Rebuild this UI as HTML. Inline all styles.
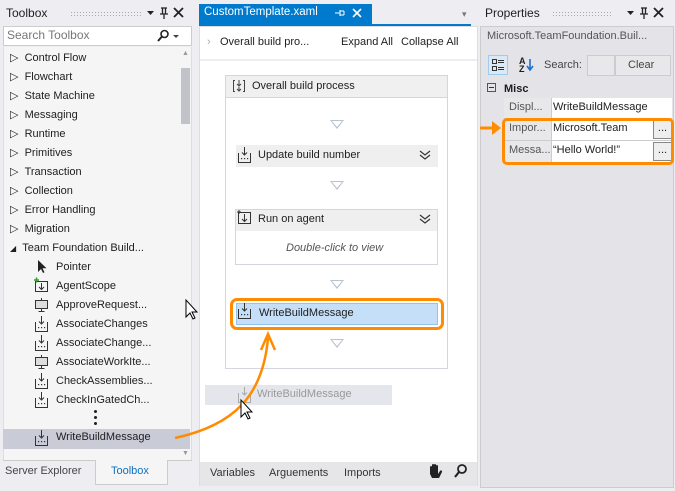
<!DOCTYPE html>
<html><head><meta charset="utf-8"><style>
*{margin:0;padding:0;box-sizing:border-box}
body{width:675px;height:491px;background:#eeeef2;font-family:"Segoe UI","Liberation Sans",sans-serif;font-size:11px;color:#1e1e1e;position:relative;overflow:hidden}
.a{position:absolute;white-space:nowrap}
.dots{background-image:radial-gradient(#aaa 0.6px,transparent 0.7px);background-size:3px 3px}
.tri{position:absolute;width:0;height:0;border-left:7px solid transparent;border-right:7px solid transparent;border-top:9px solid #b8c2d0}
.tri:after{content:"";position:absolute;left:-5px;top:-8px;border-left:5px solid transparent;border-right:5px solid transparent;border-top:6px solid #fff}
</style></head><body>
<!-- Toolbox -->
<div class="a" style="left:6px;top:6px;font-size:12px">Toolbox</div>
<div class="a dots" style="left:70px;top:11px;width:72px;height:6px"></div>
<svg class="a" style="left:145px;top:6px" width="45" height="14"><path d="M2 5h7l-3.5 4z" fill="#222"/><path d="M16 2h6M17.5 2v6M20.5 2v6M15 8h8M19 8v5" stroke="#222" stroke-width="1.3" fill="none"/><path d="M29 2l9 9M38 2l-9 9" stroke="#222" stroke-width="1.8"/></svg>
<div class="a" style="left:3px;top:26px;width:189px;height:20px;background:#fff;border:1px solid #ccc"></div>
<div class="a" style="left:7px;top:28px;font-size:12px;color:#777">Search Toolbox</div>
<svg class="a" style="left:156px;top:29px" width="30" height="14"><circle cx="8.5" cy="5" r="3.5" fill="none" stroke="#222" stroke-width="1.6"/><path d="M6 7.5L2 12" stroke="#222" stroke-width="2"/><path d="M17 6h6l-3 3z" fill="#444"/></svg>
<div class="a" style="left:3px;top:47px;width:189px;height:413px;background:#f5f5f5;border-left:1px solid #ddd;border-right:1px solid #ddd"></div>
<div class="a" style="left:181px;top:68px;width:9px;height:56px;background:#c2c3c9"></div>
<div class="a" style="left:182px;top:50px;font-size:7px;color:#999">▲</div>
<div class="a" style="left:182px;top:450px;font-size:7px;color:#999">▼</div>
<div class="a" style="left:10px;top:49px;line-height:19px;font-size:11px">
<div>▷ &nbsp;Control Flow</div><div>▷ &nbsp;Flowchart</div><div>▷ &nbsp;State Machine</div><div>▷ &nbsp;Messaging</div><div>▷ &nbsp;Runtime</div><div>▷ &nbsp;Primitives</div><div>▷ &nbsp;Transaction</div><div>▷ &nbsp;Collection</div><div>▷ &nbsp;Error Handling</div><div>▷ &nbsp;Migration</div><div><span style="font-size:8px">◢</span> &nbsp;Team Foundation Build...</div>
</div>
<div class="a" style="left:3px;top:429px;width:187px;height:20px;background:#c9cbd7"></div>
<div class="a" style="left:56px;top:258px;line-height:19px">
<div>Pointer</div><div>AgentScope</div><div>ApproveRequest...</div><div>AssociateChanges</div><div>AssociateChange...</div><div>AssociateWorkIte...</div><div>CheckAssemblies...</div><div>CheckInGatedCh...</div></div>
<div class="a" style="left:56px;top:431px">WriteBuildMessage</div>
<svg class="a" style="left:34px;top:258px" width="16" height="195">
<path d="M4 2v12l3-3 2 4 1.5-.7-2-4h4z" fill="#222"/>
<g fill="none" stroke="#333">
<rect x="1.5" y="23.5" width="12" height="10"/><path d="M7.5 25v6M5 29l2.5 2.5 2.5-2.5"/>
<rect x="1.5" y="42.5" width="12" height="8" fill="#ddd"/><path d="M7.5 40v2.5M7.5 51v2M4.5 53.5h6"/>
<rect x="1.5" y="99.5" width="12" height="8" fill="#ddd"/><path d="M7.5 97v2.5M7.5 108v2M4.5 110.5h6"/>
</g>
<path d="M0 22h5M2.5 19.5v5" stroke="#393" stroke-width="1.5"/>
<g fill="none" stroke="#333">
<path d="M1.5 64v9.5h12V64M7.5 58v8M5 63.5l2.5 2.5 2.5-2.5"/>
<path d="M1.5 83v9.5h12V83M7.5 77v8M5 82.5l2.5 2.5 2.5-2.5"/>
<path d="M1.5 121v9.5h12V121M7.5 115v8M5 120.5l2.5 2.5 2.5-2.5"/>
<path d="M1.5 140v9.5h12V140M7.5 134v8M5 139.5l2.5 2.5 2.5-2.5"/>
<path d="M1.5 178v9.5h12V178M7.5 172v8M5 177.5l2.5 2.5 2.5-2.5"/>
</g>
<g fill="#333"><rect x="4" y="69" width="1.2" height="1.2"/><rect x="7" y="69" width="1.2" height="1.2"/><rect x="10" y="69" width="1.2" height="1.2"/>
<rect x="4" y="88" width="1.2" height="1.2"/><rect x="7" y="88" width="1.2" height="1.2"/><rect x="10" y="88" width="1.2" height="1.2"/>
<rect x="4" y="126" width="1.2" height="1.2"/><rect x="7" y="126" width="1.2" height="1.2"/><rect x="10" y="126" width="1.2" height="1.2"/>
<rect x="4" y="145" width="1.2" height="1.2"/><rect x="7" y="145" width="1.2" height="1.2"/><rect x="10" y="145" width="1.2" height="1.2"/>
<rect x="4" y="183" width="1.2" height="1.2"/><rect x="7" y="183" width="1.2" height="1.2"/><rect x="10" y="183" width="1.2" height="1.2"/></g>
</svg>
<div class="a" style="left:94px;top:410px;width:3px;height:3px;background:#222;border-radius:2px;box-shadow:0 6px 0 #222,0 12px 0 #222"></div>
<div class="a" style="left:3px;top:460px;width:189px;height:1px;background:#ccc"></div>
<div class="a" style="left:95px;top:460px;width:73px;height:25px;background:#f5f5f5;border:1px solid #ccc;border-top:none"></div>
<div class="a" style="left:5px;top:465px;color:#444">Server Explorer</div>
<div class="a" style="left:111px;top:465px;color:#0e70c0">Toolbox</div>
<!-- Designer -->
<div class="a" style="left:199px;top:4px;width:173px;height:21px;background:#007acc"></div>
<div class="a" style="left:204px;top:6px;color:#fff;font-size:11.5px">CustomTemplate.xaml</div>
<svg class="a" style="left:334px;top:7px" width="32" height="12"><path d="M1 6h5M6 3v6M6 4h4M6 8h4M10 4v4" stroke="#fff" fill="none"/><path d="M19 2l8 8M27 2l-8 8" stroke="#fff" stroke-width="1.6"/></svg>
<div class="a" style="left:462px;top:9px;color:#777;font-size:9px">▾</div>
<div class="a" style="left:199px;top:24px;width:272px;height:2px;background:#007acc"></div>
<div class="a" style="left:199px;top:26px;width:279px;height:460px;background:#fff;border:1px solid #ddd"></div>
<div class="a" style="left:200px;top:59px;width:277px;height:2px;background:#eeeef2"></div>
<div class="a" style="left:207px;top:36px;color:#aaa">›</div>
<div class="a" style="left:220px;top:36px">Overall build pro...</div>
<div class="a" style="left:341px;top:36px">Expand All</div>
<div class="a" style="left:401px;top:36px">Collapse All</div>
<div class="a" style="left:225px;top:75px;width:223px;height:294px;border:1px solid #d4d6de;background:#fff"></div>
<div class="a" style="left:226px;top:76px;width:221px;height:22px;background:#f0f0f0;border-bottom:1px solid #d4d6de"></div>
<div class="a" style="left:252px;top:80px">Overall build process</div>
<svg class="a" style="left:232px;top:79px" width="14" height="14"><g fill="none" stroke="#444"><path d="M3 1.5H1.5v11H3M11 1.5h1.5v11H11M7 1v6M5 5l2 2 2-2M7 8v4M5 10l2 2 2-2"/></g></svg>
<div class="tri" style="left:330px;top:120px"></div>
<div class="a" style="left:236px;top:145px;width:202px;height:22px;background:#efefef"></div>
<div class="a" style="left:258px;top:149px">Update build number</div>
<div class="tri" style="left:330px;top:181px"></div>
<div class="a" style="left:235px;top:209px;width:203px;height:56px;border:1px solid #d4d6de"></div>
<div class="a" style="left:236px;top:210px;width:201px;height:21px;background:#efefef"></div>
<div class="a" style="left:258px;top:213px">Run on agent</div>
<svg class="a" style="left:419px;top:150px" width="12" height="80"><g fill="none" stroke="#333" stroke-width="1.2"><path d="M1 1l5 4 5-4M1 5l5 4 5-4M1 65l5 4 5-4M1 69l5 4 5-4"/></g></svg>
<div class="a" style="left:286px;top:242px;font-style:italic;color:#555">Double-click to view</div>
<div class="tri" style="left:330px;top:280px"></div>
<div class="a" style="left:230px;top:298px;width:214px;height:32px;border:3px solid #ff8c00;border-radius:7px"></div>
<div class="a" style="left:236px;top:303px;width:202px;height:22px;background:#c5dff8;border:1px solid #94c3ee"></div>
<div class="a" style="left:259px;top:307px">WriteBuildMessage</div>
<div class="tri" style="left:330px;top:339px"></div>
<div class="a" style="left:205px;top:385px;width:187px;height:20px;background:#e4e6ec"></div>
<div class="a" style="left:257px;top:388px;color:#999">WriteBuildMessage</div>
<svg class="a" style="left:237px;top:147px" width="16" height="260">
<g fill="none" stroke="#333"><path d="M1.5 6v9.5h12V6M7.5 0v8M5 5.5l2.5 2.5 2.5-2.5"/>
<rect x="1.5" y="65.5" width="12" height="11"/><path d="M7.5 67v7M5 72l2.5 2.5 2.5-2.5"/><path d="M0 65h4M2 63v4" stroke="#333"/>
<path d="M1.5 162v9.5h12V162M7.5 156v8M5 161.5l2.5 2.5 2.5-2.5"/></g>
<g fill="#333"><rect x="4" y="11" width="1.2" height="1.2"/><rect x="7" y="11" width="1.2" height="1.2"/><rect x="10" y="11" width="1.2" height="1.2"/>
<rect x="4" y="167" width="1.2" height="1.2"/><rect x="7" y="167" width="1.2" height="1.2"/><rect x="10" y="167" width="1.2" height="1.2"/></g>
<g fill="none" stroke="#aaa"><path d="M1.5 246v9.5h12V246M7.5 240v8M5 245.5l2.5 2.5 2.5-2.5"/></g>
</svg>
<div class="a" style="left:200px;top:462px;width:277px;height:24px;background:#e6e6e8"></div>
<div class="a" style="left:210px;top:467px;color:#333">Variables</div>
<div class="a" style="left:269px;top:467px;color:#333">Arguements</div>
<div class="a" style="left:344px;top:467px;color:#333">Imports</div>
<svg class="a" style="left:427px;top:463px" width="44" height="18"><path d="M3 9V4a1 1 0 012 0v4V2a1 1 0 012 0v6V2a1 1 0 012 0v6V3a1 1 0 012 0v8l2-3a1 1 0 012 1l-3 6H5l-2-4z" fill="#222"/><circle cx="35" cy="6" r="4" fill="none" stroke="#222" stroke-width="1.8"/><path d="M32 9l-4 5" stroke="#222" stroke-width="2.2"/></svg>
<!-- Properties -->
<div class="a" style="left:485px;top:6px;font-size:12px">Properties</div>
<div class="a dots" style="left:552px;top:11px;width:60px;height:6px"></div>
<svg class="a" style="left:625px;top:6px" width="45" height="14"><path d="M2 5h7l-3.5 4z" fill="#222"/><path d="M16 2h6M17.5 2v6M20.5 2v6M15 8h8M19 8v5" stroke="#222" stroke-width="1.3" fill="none"/><path d="M29 2l9 9M38 2l-9 9" stroke="#222" stroke-width="1.8"/></svg>
<div class="a" style="left:480px;top:26px;width:194px;height:462px;background:#e4e4e8;border:1px solid #ccc"></div>
<div class="a" style="left:487px;top:30px;color:#555">Microsoft.TeamFoundation.Buil...</div>
<div class="a" style="left:488px;top:55px;width:20px;height:20px;border:1px solid #9ecbf0;background:#dbe9f7"></div>
<svg class="a" style="left:491px;top:58px" width="14" height="14"><g fill="none" stroke="#333"><rect x="1.5" y="1.5" width="4" height="4"/><rect x="1.5" y="8.5" width="4" height="4"/><path d="M7 2.5h6M7 4.5h6M7 9.5h6M7 11.5h6"/></g></svg>
<div class="a" style="left:519px;top:57px;font-size:9px;font-weight:bold;line-height:8px">A<br>Z</div>
<svg class="a" style="left:526px;top:58px" width="8" height="14"><path d="M4 1v10M1 8l3 4 3-4" fill="none" stroke="#1e6fd0" stroke-width="1.6"/></svg>
<div class="a" style="left:544px;top:59px;color:#444">Search:</div>
<div class="a" style="left:587px;top:55px;width:28px;height:21px;background:#e8e8ea;border:1px solid #ccc"></div>
<div class="a" style="left:615px;top:55px;width:56px;height:21px;background:#e8e8ea;border:1px solid #ccc"></div>
<div class="a" style="left:628px;top:59px;color:#444">Clear</div>
<div class="a" style="left:487px;top:83px;width:9px;height:9px;border:1px solid #555"></div>
<div class="a" style="left:489px;top:87px;width:5px;height:1px;background:#333"></div>
<div class="a" style="left:504px;top:83px;font-weight:bold">Misc</div>
<div class="a" style="left:504px;top:98px;width:168px;height:64px;background:#fff"></div>
<div class="a" style="left:504px;top:98px;width:47px;height:64px;background:#e8e8ea"></div>
<div class="a" style="left:504px;top:118px;width:168px;height:1px;background:#ccc"></div>
<div class="a" style="left:504px;top:140px;width:168px;height:1px;background:#ccc"></div>
<div class="a" style="left:551px;top:98px;width:1px;height:64px;background:#ccc"></div>
<div class="a" style="left:509px;top:101px;color:#555">Displ...</div>
<div class="a" style="left:509px;top:122px;color:#555">Impor...</div>
<div class="a" style="left:509px;top:144px;color:#555">Messa...</div>
<div class="a" style="left:553px;top:101px">WriteBuildMessage</div>
<div class="a" style="left:553px;top:122px">Microsoft.Team</div>
<div class="a" style="left:553px;top:144px">“Hello World!”</div>
<div class="a" style="left:653px;top:120px;width:19px;height:19px;background:#eee;border:1px solid #888;text-align:center;line-height:14px">...</div>
<div class="a" style="left:653px;top:142px;width:19px;height:19px;background:#eee;border:1px solid #888;text-align:center;line-height:14px">...</div>
<div class="a" style="left:502px;top:118px;width:172px;height:47px;border:3px solid #ff8c00;border-radius:5px"></div>
<!-- arrows -->
<svg class="a" style="left:0;top:0" width="675" height="491">
<path d="M480 128H494" stroke="#ff8c00" stroke-width="3"/>
<path d="M492 121L501 128L492 135Z" fill="#ff8c00"/>
<path d="M175 438C235 425 263 395 268 338" fill="none" stroke="#ff8c00" stroke-width="2.5"/>
<path d="M261 350L268 334L275 350" fill="none" stroke="#ff8c00" stroke-width="2.5"/>
<path d="M186 300v17l4-4 3 6 2-1-3-6h5z" fill="#fff" stroke="#000" stroke-width="1"/>
<path d="M241 400v17l4-4 3 6 2-1-3-6h5z" fill="#fff" stroke="#000" stroke-width="1"/>
</svg>
</body></html>
